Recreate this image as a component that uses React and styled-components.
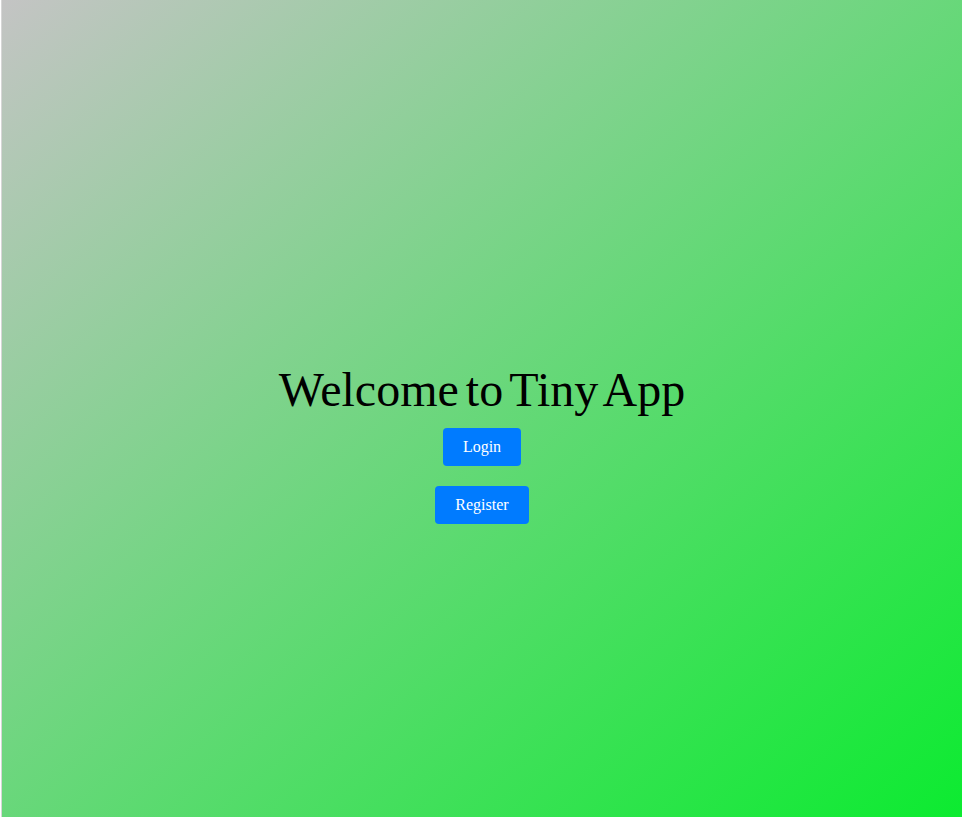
import React from 'react'
import styled, { createGlobalStyle } from 'styled-components'

const GlobalStyle = createGlobalStyle`
  html, body {
    margin: 0;
    padding: 0;
    background: #ffffff;
  }
  body {
    font-family: "Liberation Serif", "Times New Roman", serif;
  }
`

const Page = styled.div`
  box-sizing: border-box;
  height: 100vh;
  margin-left: 2px;
  background: linear-gradient(to bottom right, #c4c4c4, #0ceb30);
  display: flex;
  flex-direction: column;
  align-items: center;
  justify-content: center;
  padding-top: 69px;
  box-shadow: -1px 0 0 #d6d6d6;
`

const Title = styled.h1`
  margin: 0 0 11px;
  font-size: 48px;
  font-weight: 400;
  word-spacing: -5px;
  color: #000;
`

const Actions = styled.div`
  display: flex;
  flex-direction: column;
  align-items: center;
  gap: 20px;
`

const Button = styled.button`
  font-family: "Liberation Serif", "Times New Roman", serif;
  font-size: 16px;
  line-height: 18px;
  color: #ffffff;
  background: #007bff;
  border: none;
  border-radius: 4px;
  padding: 10px 20px;
  cursor: pointer;
`

export default function App() {
  return (
    <>
      <GlobalStyle />
      <Page>
        <Title>Welcome to Tiny App</Title>
        <Actions>
          <Button>Login</Button>
          <Button>Register</Button>
        </Actions>
      </Page>
    </>
  )
}
